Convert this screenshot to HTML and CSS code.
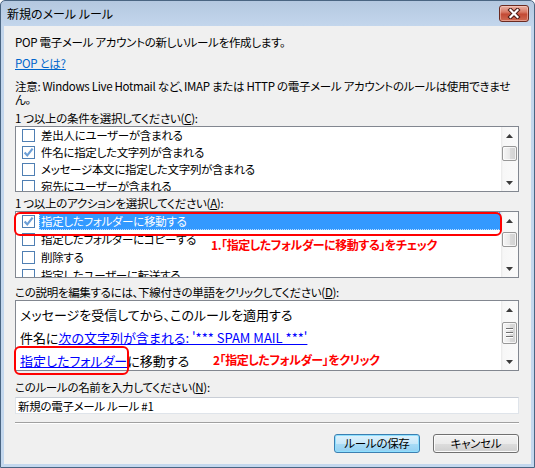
FILE: index.html
```html
<!DOCTYPE html>
<html lang="ja">
<head>
<meta charset="utf-8">
<title>新規のメール ルール</title>
<link rel="stylesheet" href="styles.css">
</head>
<body>
<div class="window">
  <div class="titlebar">
    <span class="title">新規のメール ルール</span>
    <button class="close" aria-label="閉じる">
      <svg width="14" height="11" viewBox="0 0 14 11"><path d="M3.5 2 L10.5 9 M10.5 2 L3.5 9" stroke="#4a1b14" stroke-width="4.2" stroke-linecap="square"/><path d="M3.5 2 L10.5 9 M10.5 2 L3.5 9" stroke="#fff" stroke-width="2.2" stroke-linecap="square"/></svg>
    </button>
  </div>
  <div class="content">
    <p class="intro">POP 電子メール アカウントの新しいルールを作成します。</p>
    <a class="pop" href="#">POP とは?</a>
    <p class="note"><span class="nowrap">注意: Windows Live Hotmail など、IMAP または HTTP の電子メール アカウントのルールは使用できませ</span><br>ん。</p>

    <div class="label gap-c">1 つ以上の条件を選択してください(<u>C</u>):</div>
    <div class="listbox list1">
      <ul class="items">
        <li><span class="cb"></span><span class="txt">差出人にユーザーが含まれる</span></li>
        <li><span class="cb checked"><svg width="11" height="11" viewBox="0 0 11 11"><path d="M1.6 5.4 L4.3 8.4 L9.6 1.6" fill="none" stroke="#6d9fd6" stroke-width="2.2"/></svg></span><span class="txt">件名に指定した文字列が含まれる</span></li>
        <li><span class="cb"></span><span class="txt">メッセージ本文に指定した文字列が含まれる</span></li>
        <li><span class="cb"></span><span class="txt">宛先にユーザーが含まれる</span></li>
      </ul>
      <div class="scrollbar">
        <div class="sb-btn"><svg width="7" height="4"><path d="M0 4 L3.5 0 L7 4Z" fill="#3b3b3b"/></svg></div>
        <div class="sb-track"><div class="thumb t1"></div></div>
        <div class="sb-btn"><svg width="7" height="4"><path d="M0 0 L3.5 4 L7 0Z" fill="#3b3b3b"/></svg></div>
      </div>
    </div>

    <div class="label gap-a">1 つ以上のアクションを選択してください(<u>A</u>):</div>
    <div class="listbox list2">
      <ul class="items">
        <li class="selected"><span class="cb checked"><svg width="11" height="11" viewBox="0 0 11 11"><path d="M1.6 5.4 L4.3 8.4 L9.6 1.6" fill="none" stroke="#6d9fd6" stroke-width="2.2"/></svg></span><span class="txt">指定したフォルダーに移動する</span></li>
        <li><span class="cb"></span><span class="txt">指定したフォルダーにコピーする</span></li>
        <li><span class="cb"></span><span class="txt">削除する</span></li>
        <li><span class="cb"></span><span class="txt">指定したユーザーに転送する</span></li>
      </ul>
      <div class="scrollbar">
        <div class="sb-btn"><svg width="7" height="4"><path d="M0 4 L3.5 0 L7 4Z" fill="#3b3b3b"/></svg></div>
        <div class="sb-track"><div class="thumb t2"></div></div>
        <div class="sb-btn"><svg width="7" height="4"><path d="M0 0 L3.5 4 L7 0Z" fill="#3b3b3b"/></svg></div>
      </div>
    </div>

    <div class="label gap-d">この説明を編集するには、下線付きの単語をクリックしてください(<u>D</u>):</div>
    <div class="listbox desc">
      <div class="desc-text">
        <div class="dline">メッセージを受信してから、このルールを適用する</div>
        <div class="dline">件名に<a class="rule-link" href="#">次の文字列が含まれる: '*** SPAM MAIL ***'</a></div>
        <div class="dline"><a class="rule-link" href="#">指定したフォルダー</a>に移動する</div>
      </div>
      <div class="scrollbar">
        <div class="sb-btn"><svg width="7" height="4"><path d="M0 4 L3.5 0 L7 4Z" fill="#3b3b3b"/></svg></div>
        <div class="sb-track"><div class="thumb t3"><span></span><span></span><span></span></div></div>
        <div class="sb-btn"><svg width="7" height="4"><path d="M0 0 L3.5 4 L7 0Z" fill="#3b3b3b"/></svg></div>
      </div>
    </div>

    <div class="label gap-n">このルールの名前を入力してください(<u>N</u>):</div>
    <input class="name" type="text" value="新規の電子メール ルール #1">
    <div class="separator"></div>
    <div class="buttons">
      <button class="btn primary">ルールの保存</button>
      <button class="btn">キャンセル</button>
    </div>

    <div class="callout c1"></div>
    <div class="callout c2"></div>
    <div class="annot a1">1.「指定したフォルダーに移動する」をチェック</div>
    <div class="annot a2">2「指定したフォルダー」をクリック</div>
  </div>
</div>
</body>
</html>
```
FILE: styles.css
```css
html, body {
  margin: 0;
  padding: 0;
}
body {
  width: 535px;
  height: 468px;
  overflow: hidden;
  background: #fff;
  font-family: "Noto Sans CJK JP", "Noto Sans", sans-serif;
  font-size: 11.5px;
  letter-spacing: -0.3px;
  font-feature-settings: "palt";
  color: #000;
}

.window {
  box-sizing: border-box;
  width: 535px;
  height: 468px;
  border: 1px solid #4a6582;
  border-radius: 5px 5px 0 0;
  background: linear-gradient(#b4c8e0 0, #c3d6ec 25px, #c4d8ee 100%);
  display: flex;
  flex-direction: column;
}

.titlebar {
  height: 25px;
  flex: none;
  display: flex;
  align-items: center;
  justify-content: space-between;
  padding: 0 5px 0 6px;
}
.title {
  line-height: 14px;
  font-size: 12px;
  letter-spacing: 0;
  color: #000;
}
.close {
  box-sizing: border-box;
  width: 30px;
  height: 17px;
  padding: 0;
  border: 1px solid #6b2a20;
  border-radius: 3px;
  background: linear-gradient(#e9b1a4 0%, #d97a66 40%, #c34a35 55%, #cf6a52 100%);
  box-shadow: inset 0 0 0 1px rgba(255, 220, 210, 0.45);
  display: flex;
  align-items: center;
  justify-content: center;
}

.content {
  flex: 1;
  margin: 0 3px 3px 3px;
  background: #f0f0f0;
  padding: 9px 12px 0 11px;
  position: relative;
}

.intro {
  margin: 0;
  line-height: 14px;
}
.pop {
  display: block;
  width: max-content;
  margin-top: 7px;
  line-height: 14px;
  color: #0066cc;
  text-decoration: underline;
}
.note {
  margin: 10px 0 0;
  line-height: 13px;
}
.nowrap {
  white-space: nowrap;
}

.label {
  line-height: 14px;
  white-space: nowrap;
}
.label u {
  text-decoration: underline;
}
.gap-c { margin-top: 5px; }
.gap-a { margin-top: 4px; }
.gap-d { margin-top: 7px; }
.gap-n { margin-top: 9px; }

.listbox {
  box-sizing: border-box;
  margin-top: 1px;
  border: 1px solid #828790;
  background: #fff;
  display: flex;
  overflow: hidden;
}
.list1 { height: 66px; }
.list2 { height: 67px; }
.desc { height: 71px; }

.items {
  list-style: none;
  margin: 0;
  padding: 0;
  flex: 1;
  min-width: 0;
}
.items li {
  display: flex;
  align-items: center;
  height: 17px;
  padding-left: 6px;
  white-space: nowrap;
}
.list2 .items li { height: 18px; }
.cb {
  box-sizing: border-box;
  flex: none;
  width: 13px;
  height: 13px;
  border: 1px solid #4f7fb3;
  background: #fff;
  margin-right: 4px;
  display: flex;
  align-items: center;
  justify-content: center;
}
.txt {
  flex: 1;
  align-self: stretch;
  display: flex;
  align-items: center;
  padding-left: 2px;
  line-height: 17px;
}
.selected .txt {
  background: #3399ff;
  color: #fff;
  outline: 1px dotted rgba(255, 255, 255, 0.7);
  outline-offset: -1px;
}

.scrollbar {
  flex: none;
  width: 17px;
  display: flex;
  flex-direction: column;
  background: linear-gradient(90deg, #e8e8e8 0, #f7f7f7 2px, #fafafa 100%);
}
.sb-btn {
  height: 17px;
  flex: none;
  display: flex;
  align-items: center;
  justify-content: center;
}
.sb-track {
  flex: 1;
  display: flex;
  flex-direction: column;
  align-items: center;
}
.thumb {
  box-sizing: border-box;
  width: 15px;
  border: 1px solid #989898;
  border-radius: 2px;
  background: linear-gradient(90deg, #f6f6f6 0%, #e9e9e9 50%, #dadada 51%, #d2d2d2 100%);
  box-shadow: inset 0 0 0 1px rgba(255, 255, 255, 0.7);
}
.t1 { margin-top: 2px; height: 15px; }
.t2 { margin-top: 3px; height: 15px; }
.t3 {
  margin-top: 4px;
  height: 22px;
  display: flex;
  flex-direction: column;
  align-items: center;
  justify-content: center;
  gap: 2px;
}
.t3 span {
  display: block;
  width: 7px;
  height: 1px;
  background: #6f6f6f;
  border-bottom: 1px solid #fff;
}

.desc-text {
  flex: 1;
  padding: 2px 0 0 4px;
  font-size: 13px;
  letter-spacing: 0;
}
.dline {
  line-height: 23px;
  white-space: nowrap;
}
.rule-link {
  color: #0000ff;
  text-decoration: underline;
}

.name {
  display: block;
  box-sizing: border-box;
  width: 100%;
  height: 17px;
  margin: 3px 0 0;
  padding: 0 2px;
  border: 1px solid #dfe4ea;
  border-top-color: #c9ced6;
  background: #fff;
  font: inherit;
  font-size: 11.5px;
  letter-spacing: -0.3px;
  line-height: 15px;
  color: #000;
  outline: none;
}

.separator {
  margin-top: 8px;
  height: 0;
  border-top: 1px solid #a0a0a0;
  border-bottom: 1px solid #ffffff;
}

.buttons {
  margin-top: 10px;
  display: flex;
  justify-content: flex-end;
  gap: 13px;
}
.btn {
  box-sizing: border-box;
  width: 86px;
  height: 19px;
  padding: 0;
  border: 1px solid #707070;
  border-radius: 3px;
  background: linear-gradient(#f3f3f3 0%, #ebebeb 50%, #dddddd 51%, #cfcfcf 100%);
  box-shadow: inset 0 0 0 1px #fbfbfb;
  font: inherit;
  font-size: 11.5px;
  letter-spacing: -0.3px;
  line-height: 15px;
  color: #000;
}
.btn.primary {
  border-color: #3c7fb1;
  background: linear-gradient(#e0f2fc 0%, #c8e8f9 50%, #a9dcf6 51%, #93d0f2 100%);
  box-shadow: inset 0 0 0 1px #8ee0ff;
}

.callout {
  position: absolute;
  box-sizing: border-box;
  border: 2px solid #ff0000;
  border-radius: 6px;
}
.c1 {
  left: 10px;
  top: 186px;
  width: 488px;
  height: 24px;
}
.c2 {
  left: 10px;
  top: 320px;
  width: 115px;
  height: 29px;
}
.annot {
  position: absolute;
  color: #ff0000;
  font-weight: bold;
  font-size: 12px;
  letter-spacing: -0.45px;
  line-height: 14px;
  white-space: nowrap;
}
.a1 { left: 207px; top: 212px; }
.a2 { left: 209px; top: 327px; }
```
